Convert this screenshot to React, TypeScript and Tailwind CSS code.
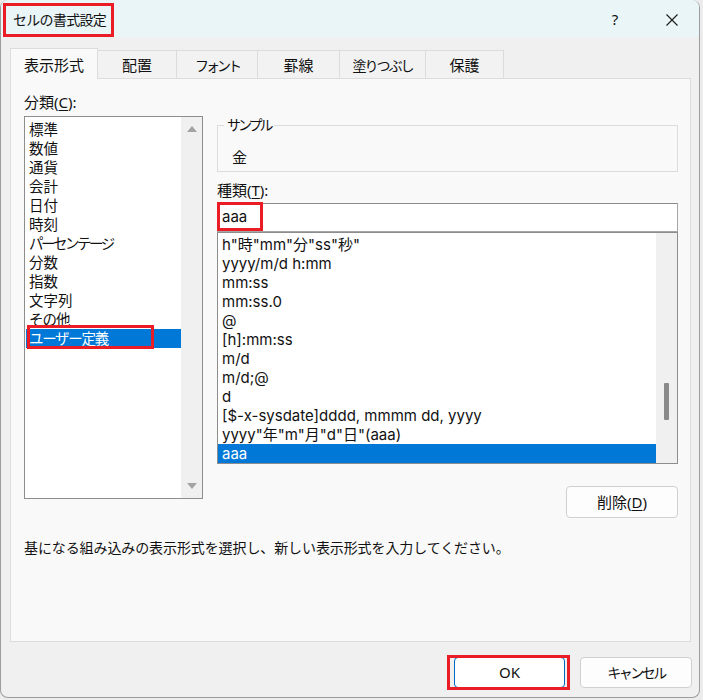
import React from 'react';

const cats: { t: string; c: string }[] = [
  { t: '標準', c: '' },
  { t: '数値', c: '' },
  { t: '通貨', c: '' },
  { t: '会計', c: '' },
  { t: '日付', c: '' },
  { t: '時刻', c: '' },
  { t: 'パーセンテージ', c: 'tracking-[-2.5px]' },
  { t: '分数', c: '' },
  { t: '指数', c: '' },
  { t: '文字列', c: '' },
  { t: 'その他', c: 'tracking-[-1px]' },
  { t: 'ユーザー定義', c: 'tracking-[-1.3px]' },
];
const formats = [
  'h"時"mm"分"ss"秒"',
  'yyyy/m/d h:mm',
  'mm:ss',
  'mm:ss.0',
  '@',
  '[h]:mm:ss',
  'm/d',
  'm/d;@',
  'd',
  '[$-x-sysdate]dddd, mmmm dd, yyyy',
  'yyyy"年"m"月"d"日"(aaa)',
  'aaa',
];

const tabs = [
  { label: '表示形式', w: 'w-[88px]', c: 'text-[15px]' },
  { label: '配置', w: 'w-[79px]', c: 'text-[15px]' },
  { label: 'フォント', w: 'w-[81px]', c: 'text-[14px] tracking-[-3px]' },
  { label: '罫線', w: 'w-[82px]', c: 'text-[15px]' },
  { label: '塗りつぶし', w: 'w-[86px]', c: 'text-[14px] tracking-[-2px]' },
  { label: '保護', w: 'w-[78px]', c: 'text-[15px]' },
];

function UpTri() {
  return (
    <svg width="10" height="6" viewBox="0 0 10 6">
      <polygon points="5,0 10,6 0,6" fill="#a3a3a3" />
    </svg>
  );
}
function DownTri() {
  return (
    <svg width="10" height="6" viewBox="0 0 10 6">
      <polygon points="0,0 10,0 5,6" fill="#a3a3a3" />
    </svg>
  );
}

export default function App() {
  return (
    <div className="w-[703px] h-[700px] bg-[#ececec] font-['Noto_Sans','Noto_Sans_CJK_JP',sans-serif] text-[#111] overflow-hidden">
      <div className="w-[700px] h-[698px] flex flex-col rounded-lg overflow-hidden border-x border-b border-[#9c9c9c] bg-[#f0f0f0]">
        {/* Title bar */}
        <div className="h-[37px] shrink-0 bg-[#eaf5f8] flex items-start">
          <div className="mt-[3px] ml-[2px] h-[34px] w-[111px] border-[3px] border-[#ea1c26] pl-[7px] flex items-center text-[14px] tracking-[-0.7px] leading-none whitespace-nowrap">
            セルの書式設定
          </div>
          <div className="flex-1" />
          <div className="h-full flex items-center pt-[2px]">
            <span className="w-[20px] text-center text-[15px] leading-none">?</span>
            <svg className="ml-[41px] mr-[21px]" width="12" height="12" viewBox="0 0 12 12">
              <path d="M0.5 0.5 L11.5 11.5 M11.5 0.5 L0.5 11.5" stroke="#1b1b1b" strokeWidth="1.1" />
            </svg>
          </div>
        </div>

        {/* Tabs */}
        <div className="mt-[11px] ml-[9px] h-[30px] flex items-end relative z-10">
          {tabs.map((t, i) =>
            i === 0 ? (
              <div
                key={t.label}
                className={`${t.w} ${t.c} h-[31px] -mb-px border-x border-t border-[#dcdcdc] bg-[#f9f9f9] flex items-center justify-center pt-[3px]`}
              >
                {t.label}
              </div>
            ) : (
              <div
                key={t.label}
                className={`${t.w} ${t.c} h-[28px] border-r border-t border-[#dcdcdc] bg-[#f2f2f2] flex items-center justify-center pt-[2px]`}
              >
                {t.label}
              </div>
            )
          )}
        </div>

        {/* Panel */}
        <div className="ml-[9px] w-[681px] h-[564px] shrink-0 border border-[#dcdcdc] bg-[#f9f9f9] flex flex-col">
          <div className="flex pl-[13px]">
            {/* Left column */}
            <div className="w-[179px] pt-[13px] flex flex-col">
              <div className="h-[20px] leading-[20px] text-[15px]">
                分類(<span className="underline underline-offset-2">C</span>):
              </div>
              <div className="mt-[4px] h-[383px] border border-[#8d8d8d] bg-white flex">
                <div className="flex-1 pt-[3px] pl-[1px] overflow-visible">
                  {cats.map((c, i) =>
                    i === cats.length - 1 ? (
                      <div key={c.t} className={`relative h-[19px] leading-[19px] px-[3px] bg-[#0078d7] text-white text-[14.5px] whitespace-nowrap ${c.c}`}>
                        {c.t}
                        <div className="absolute left-[1px] top-[-4px] w-[127px] h-[24px] border-[3px] border-[#ea1c26]" />
                      </div>
                    ) : (
                      <div key={c.t} className={`h-[19px] leading-[19px] px-[3px] text-[14.5px] whitespace-nowrap ${c.c}`}>
                        {c.t}
                      </div>
                    )
                  )}
                </div>
                <div className="w-[21px] bg-[#f0f0f0] flex flex-col items-center justify-between py-[9px]">
                  <UpTri />
                  <DownTri />
                </div>
              </div>
            </div>

            {/* Right column */}
            <div className="ml-[14px] w-[461px] flex flex-col">
              <div className="mt-[46px] h-[47px] relative border border-[#dcdcdc] pl-[14px] pt-[21px]">
                <div className="absolute left-[6px] top-[-11px] px-[3px] bg-[#f9f9f9] text-[14px] tracking-[-3px] leading-[20px]">サンプル</div>
                <div className="text-[15px] leading-[20px]">金</div>
              </div>
              <div className="mt-[8px] h-[20px] leading-[20px] text-[15px]">
                種類(<span className="underline underline-offset-2">T</span>):
              </div>
              <div className="mt-[3px] h-[29px] relative border border-[#a6a6a6] border-t-[#8a8a8a] bg-white flex items-center pl-[4px] text-[15px] font-['Inter','Noto_Sans_CJK_JP',sans-serif]">
                aaa
                <div className="absolute left-[-1px] top-[-2px] w-[46px] h-[29px] border-[3px] border-[#ea1c26]" />
              </div>
              <div className="h-[232px] border border-[#8d8d8d] bg-white flex overflow-hidden font-['Inter','Noto_Sans_CJK_JP',sans-serif]">
                <div className="flex-1 pt-[2px] overflow-hidden">
                  {formats.map((f, i) =>
                    i === formats.length - 1 ? (
                      <div key={f} className="h-[19px] leading-[19px] pl-[4px] bg-[#0078d7] text-white text-[15px] whitespace-nowrap">
                        {f}
                      </div>
                    ) : (
                      <div key={f} className="h-[19px] leading-[19px] pl-[4px] text-[15px] whitespace-nowrap">
                        {f}
                      </div>
                    )
                  )}
                </div>
                <div className="w-[21px] bg-[#f0f0f0] flex flex-col items-center pt-[150px]">
                  <div className="w-[5px] h-[37px] bg-[#8a8a8a] rounded-[1px]" />
                </div>
              </div>
              <div className="mt-[22px] self-end w-[112px] h-[32px] rounded-[4px] border border-[#d0d0d0] bg-[#fdfdfd] flex items-center justify-center text-[15px]">
                削除(<span className="underline underline-offset-2">D</span>)
              </div>
            </div>
          </div>
          <div className="mt-[20px] pl-[13px] h-[20px] leading-[20px] text-[14px] tracking-[-0.1px] whitespace-nowrap">
            基になる組み込みの表示形式を選択し、新しい表示形式を入力してください。
          </div>
        </div>

        {/* Buttons */}
        <div className="mt-[15px] flex justify-end pr-[7px] gap-[15px]">
          <div className="relative w-[111px] h-[31px] rounded-[4px] border border-[#0067c0] bg-white flex items-center justify-center text-[15px]">
            OK
            <div className="absolute left-[-8px] top-[-3px] w-[123px] h-[35px] border-[3px] border-[#ea1c26]" />
          </div>
          <div className="w-[112px] h-[31px] rounded-[4px] border border-[#d0d0d0] bg-[#fdfdfd] flex items-center justify-center text-[14px] tracking-[-2.5px]">
            キャンセル
          </div>
        </div>
      </div>
    </div>
  );
}
